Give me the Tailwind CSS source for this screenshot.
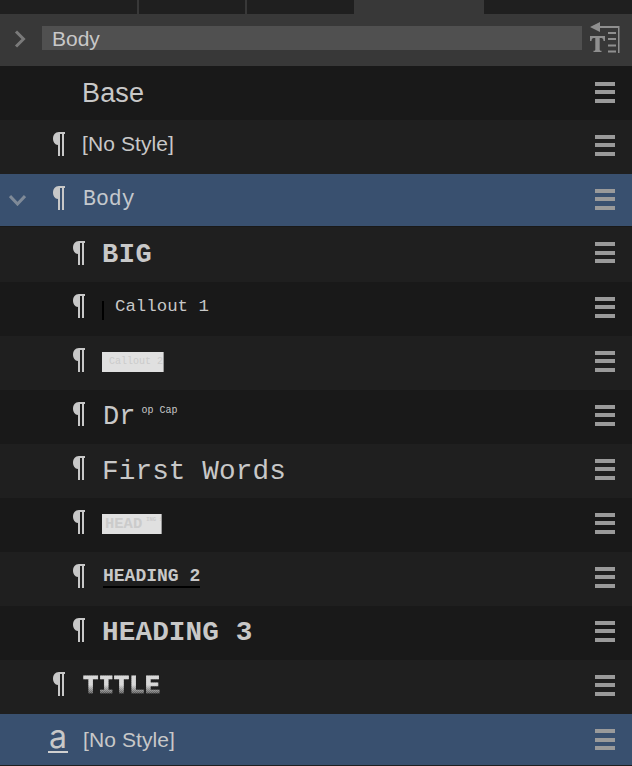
<!DOCTYPE html>
<html>
<head>
<meta charset="utf-8">
<script src="https://cdn.jsdelivr.net/npm/@tailwindcss/browser@4"></script>
</head>
<body class="m-0 bg-[#1f1f1f]">
<div class="w-[632px] h-[766px] overflow-hidden flex flex-col font-['Liberation_Sans',Arial,sans-serif] text-[#c8c8c8]">

  <!-- tab strip -->
  <div class="h-[14px] flex bg-[#1f1f1f]">
    <div class="w-[137px] border-r-2 border-[#383838] box-content"></div>
    <div class="w-[106px] border-r-2 border-[#383838] box-content"></div>
    <div class="w-[107px]"></div>
    <div class="w-[130px] bg-[#383838]"></div>
  </div>

  <!-- search header -->
  <div class="h-[52px] bg-[#383838] flex items-center relative">
    <svg class="ml-[14px] w-[12px] h-[18px] -mt-[3px]" viewBox="0 0 12 18" fill="none" stroke="#7a7a7a" stroke-width="3"><path d="M2 1.500 L9.500 9 L2 16.500"/></svg>
    <div class="ml-[16px] w-[540px] h-[24px] bg-[#505050] pl-[10px] text-[21px] leading-[25px] -mt-[4px]">Body</div>
    <svg class="ml-[8px] w-[30px] h-[32px] -mt-[4px]" viewBox="0 0 30 32" fill="#8f8f8f">
      <path d="M0 5 L10 0 L10 4 L29.500 4 L29.500 31 L28 31 L28 6 L10 6 L10 10 Z"/>
      <rect x="18" y="10" width="8" height="2"/><rect x="18" y="16" width="8" height="2"/><rect x="18" y="22.500" width="8" height="2"/><rect x="18" y="28.500" width="8" height="2"/>
      <path d="M0 14 H15 V19 H13.500 C13.500 16.500 12.500 16 9.700 16 V27.500 C9.700 28.500 10 28.800 11.500 28.800 V30 H3.500 V28.800 C5 28.800 5.300 28.500 5.300 27.500 V16 C2.500 16 1.500 16.500 1.500 19 H0 Z"/>
    </svg>
  </div>

  <!-- Base -->
  <div class="h-[54px] bg-[#191919] flex items-center pl-[82px] pr-[17px] justify-between">
    <span class="text-[27px] leading-none tracking-[0.15px]">Base</span>
    <div class="-mt-[2px] flex flex-col gap-[4.500px] w-[20px]"><i class="block h-[4px] bg-[#9a9a9a]"></i><i class="block h-[4px] bg-[#9a9a9a]"></i><i class="block h-[4px] bg-[#9a9a9a]"></i></div>
  </div>

  <!-- [No Style] -->
  <div class="h-[54px] bg-[#1f1f1f] flex items-center pl-[53px] pr-[17px]">
    <svg class="w-[12px] h-[24px] mr-[17px] -mt-[6px]" viewBox="0 0 12 24" fill="#c8c8c8"><path d="M12 0 V2 H11 V24 H9 V2 H7 V24 H5 V13 C2 13 0 10 0 6.500 C0 3 2 0 6 0 Z"/></svg>
    <span class="text-[21px] leading-none -mt-[7px] tracking-[0.1px]">[No Style]</span>
    <div class="ml-auto -mt-[4px] flex flex-col gap-[4.500px] w-[20px]"><i class="block h-[4px] bg-[#9a9a9a]"></i><i class="block h-[4px] bg-[#9a9a9a]"></i><i class="block h-[4px] bg-[#9a9a9a]"></i></div>
  </div>

  <!-- Body selected -->
  <div class="h-[52px] bg-[#39506f] flex items-center pr-[17px] relative">
    <svg class="ml-[9px] w-[17px] h-[12px] mr-[27px]" viewBox="0 0 17 12" fill="none" stroke="#7f8a98" stroke-width="3"><path d="M1 2 L8.500 10 L16 2"/></svg>
    <svg class="w-[12px] h-[24px] mr-[18px] -mt-[4px]" viewBox="0 0 12 24" fill="#c8c8c8"><path d="M12 0 V2 H11 V24 H9 V2 H7 V24 H5 V13 C2 13 0 10 0 6.500 C0 3 2 0 6 0 Z"/></svg>
    <span class="font-['Liberation_Mono',monospace] text-[21.500px] leading-none text-[#c4c8cd] -mt-[1px]">Body</span>
    <div class="ml-auto -mt-[2px] flex flex-col gap-[4.500px] w-[20px]"><i class="block h-[4px] bg-[#9a9a9a]"></i><i class="block h-[4px] bg-[#9a9a9a]"></i><i class="block h-[4px] bg-[#9a9a9a]"></i></div>
  </div>

  <!-- BIG -->
  <div class="h-[56px] bg-[#1f1f1f] flex items-center pl-[73px] pr-[17px] border-t border-[#191919]">
    <svg class="w-[12px] h-[24px] mr-[17px] -mt-[4px]" viewBox="0 0 12 24" fill="#c8c8c8"><path d="M12 0 V2 H11 V24 H9 V2 H7 V24 H5 V13 C2 13 0 10 0 6.500 C0 3 2 0 6 0 Z"/></svg>
    <span class="font-['Liberation_Mono',monospace] font-bold text-[27px] leading-none tracking-[0.5px] mt-[2px]">BIG</span>
    <div class="ml-auto -mt-[4px] flex flex-col gap-[4.500px] w-[20px]"><i class="block h-[4px] bg-[#9a9a9a]"></i><i class="block h-[4px] bg-[#9a9a9a]"></i><i class="block h-[4px] bg-[#9a9a9a]"></i></div>
  </div>

  <!-- Callout 1 -->
  <div class="h-[54px] bg-[#191919] flex items-center pl-[73px] pr-[17px]">
    <svg class="w-[12px] h-[24px] mr-[17px] -mt-[6px]" viewBox="0 0 12 24" fill="#c8c8c8"><path d="M12 0 V2 H11 V24 H9 V2 H7 V24 H5 V13 C2 13 0 10 0 6.500 C0 3 2 0 6 0 Z"/></svg>
    <span class="w-[2px] h-[19px] bg-black mt-[3px] mr-[11px]"></span>
    <span class="font-['Liberation_Mono',monospace] text-[17.400px] leading-none -mt-[5px]">Callout 1</span>
    <div class="ml-auto -mt-[4px] flex flex-col gap-[4.500px] w-[20px]"><i class="block h-[4px] bg-[#9a9a9a]"></i><i class="block h-[4px] bg-[#9a9a9a]"></i><i class="block h-[4px] bg-[#9a9a9a]"></i></div>
  </div>

  <!-- Callout 2 -->
  <div class="h-[54px] bg-[#1f1f1f] flex items-center pl-[73px] pr-[17px]">
    <svg class="w-[12px] h-[24px] mr-[17px] -mt-[6px]" viewBox="0 0 12 24" fill="#c8c8c8"><path d="M12 0 V2 H11 V24 H9 V2 H7 V24 H5 V13 C2 13 0 10 0 6.500 C0 3 2 0 6 0 Z"/></svg>
    <span class="w-[62px] h-[20px] -mt-[2px] bg-[#e0e0e0] border-r border-[#999] pl-[7px] overflow-hidden whitespace-nowrap font-['Liberation_Mono',monospace] text-[10px] leading-[20px] text-[#cbcbcb]">Callout 2</span>
    <div class="ml-auto -mt-[4px] flex flex-col gap-[4.500px] w-[20px]"><i class="block h-[4px] bg-[#9a9a9a]"></i><i class="block h-[4px] bg-[#9a9a9a]"></i><i class="block h-[4px] bg-[#9a9a9a]"></i></div>
  </div>

  <!-- Drop Cap -->
  <div class="h-[54px] bg-[#191919] flex items-center pl-[73px] pr-[17px]">
    <svg class="w-[12px] h-[24px] mr-[18px] -mt-[6px]" viewBox="0 0 12 24" fill="#c8c8c8"><path d="M12 0 V2 H11 V24 H9 V2 H7 V24 H5 V13 C2 13 0 10 0 6.500 C0 3 2 0 6 0 Z"/></svg>
    <span class="font-['Liberation_Mono',monospace] text-[27px] leading-none">Dr</span>
    <span class="font-['Liberation_Mono',monospace] text-[10px] leading-none ml-[6px] -mt-[12px]">op Cap</span>
    <div class="ml-auto -mt-[4px] flex flex-col gap-[4.500px] w-[20px]"><i class="block h-[4px] bg-[#9a9a9a]"></i><i class="block h-[4px] bg-[#9a9a9a]"></i><i class="block h-[4px] bg-[#9a9a9a]"></i></div>
  </div>

  <!-- First Words -->
  <div class="h-[54px] bg-[#1f1f1f] flex items-center pl-[73px] pr-[17px]">
    <svg class="w-[12px] h-[24px] mr-[17px] -mt-[6px]" viewBox="0 0 12 24" fill="#c8c8c8"><path d="M12 0 V2 H11 V24 H9 V2 H7 V24 H5 V13 C2 13 0 10 0 6.500 C0 3 2 0 6 0 Z"/></svg>
    <span class="font-['Liberation_Mono',monospace] text-[27.700px] leading-none mt-[2px] tracking-[0.1px]">First Words</span>
    <div class="ml-auto -mt-[4px] flex flex-col gap-[4.500px] w-[20px]"><i class="block h-[4px] bg-[#9a9a9a]"></i><i class="block h-[4px] bg-[#9a9a9a]"></i><i class="block h-[4px] bg-[#9a9a9a]"></i></div>
  </div>

  <!-- Heading 1 -->
  <div class="h-[54px] bg-[#191919] flex items-center pl-[73px] pr-[17px]">
    <svg class="w-[12px] h-[24px] mr-[17px] -mt-[6px]" viewBox="0 0 12 24" fill="#c8c8c8"><path d="M12 0 V2 H11 V24 H9 V2 H7 V24 H5 V13 C2 13 0 10 0 6.500 C0 3 2 0 6 0 Z"/></svg>
    <span class="w-[60px] h-[20px] -mt-[2px] bg-[#e0e0e0] border-r border-[#999] pl-[3px] flex items-start overflow-hidden whitespace-nowrap font-['Liberation_Mono',monospace] font-bold text-[#cbcbcb]"><span class="text-[15.500px] leading-[20px]">HEAD</span><span class="text-[5.500px] leading-none ml-[4px] mt-[3px]">ING 1</span></span>
    <div class="ml-auto -mt-[4px] flex flex-col gap-[4.500px] w-[20px]"><i class="block h-[4px] bg-[#9a9a9a]"></i><i class="block h-[4px] bg-[#9a9a9a]"></i><i class="block h-[4px] bg-[#9a9a9a]"></i></div>
  </div>

  <!-- Heading 2 -->
  <div class="h-[54px] bg-[#1f1f1f] flex items-center pl-[73px] pr-[17px]">
    <svg class="w-[12px] h-[24px] mr-[18px] -mt-[6px]" viewBox="0 0 12 24" fill="#c8c8c8"><path d="M12 0 V2 H11 V24 H9 V2 H7 V24 H5 V13 C2 13 0 10 0 6.500 C0 3 2 0 6 0 Z"/></svg>
    <span class="font-['Liberation_Mono',monospace] font-bold text-[18px] leading-[20px] -mt-[4px] border-b-2 border-black whitespace-nowrap">HEADING 2</span>
    <div class="ml-auto -mt-[4px] flex flex-col gap-[4.500px] w-[20px]"><i class="block h-[4px] bg-[#9a9a9a]"></i><i class="block h-[4px] bg-[#9a9a9a]"></i><i class="block h-[4px] bg-[#9a9a9a]"></i></div>
  </div>

  <!-- Heading 3 -->
  <div class="h-[54px] bg-[#191919] flex items-center pl-[73px] pr-[17px]">
    <svg class="w-[12px] h-[24px] mr-[17px] -mt-[6px]" viewBox="0 0 12 24" fill="#c8c8c8"><path d="M12 0 V2 H11 V24 H9 V2 H7 V24 H5 V13 C2 13 0 10 0 6.500 C0 3 2 0 6 0 Z"/></svg>
    <span class="font-['Liberation_Mono',monospace] font-bold text-[27.700px] leading-none whitespace-nowrap tracking-[0.1px]">HEADING 3</span>
    <div class="ml-auto -mt-[4px] flex flex-col gap-[4.500px] w-[20px]"><i class="block h-[4px] bg-[#9a9a9a]"></i><i class="block h-[4px] bg-[#9a9a9a]"></i><i class="block h-[4px] bg-[#9a9a9a]"></i></div>
  </div>

  <!-- Title -->
  <div class="h-[54px] bg-[#1f1f1f] flex items-center pl-[53px] pr-[17px]">
    <svg class="w-[12px] h-[24px] mr-[18px] -mt-[6px]" viewBox="0 0 12 24" fill="#c8c8c8"><path d="M12 0 V2 H11 V24 H9 V2 H7 V24 H5 V13 C2 13 0 10 0 6.500 C0 3 2 0 6 0 Z"/></svg>
    <span class="font-['Liberation_Mono',monospace] font-bold text-[25.700px] leading-none [-webkit-text-stroke:0.8px_transparent] [background-image:linear-gradient(to_bottom,#d8d8d8_42%,#d8d8d800_80%),repeating-conic-gradient(#6a6a6a_0_25%,#3a3a3a_0_50%)] [background-size:100%_100%,2px_2px] bg-clip-text text-transparent">TITLE</span>
    <div class="ml-auto -mt-[4px] flex flex-col gap-[4.500px] w-[20px]"><i class="block h-[4px] bg-[#9a9a9a]"></i><i class="block h-[4px] bg-[#9a9a9a]"></i><i class="block h-[4px] bg-[#9a9a9a]"></i></div>
  </div>

  <!-- character style -->
  <div class="h-[51px] bg-[#39506f] flex items-center pl-[48px] pr-[17px]">
    <span class="w-[20px] mr-[15px] border-b-2 border-[#d0d0d0] text-center font-['Inter',sans-serif] text-[32px] leading-[25px] h-[29px] -mt-[3px]">a</span>
    <span class="text-[21px] leading-none -mt-[1px] tracking-[0.1px]">[No Style]</span>
    <div class="ml-auto flex flex-col gap-[4.500px] w-[20px]"><i class="block h-[4px] bg-[#9a9a9a]"></i><i class="block h-[4px] bg-[#9a9a9a]"></i><i class="block h-[4px] bg-[#9a9a9a]"></i></div>
  </div>
</div>
</body>
</html>
